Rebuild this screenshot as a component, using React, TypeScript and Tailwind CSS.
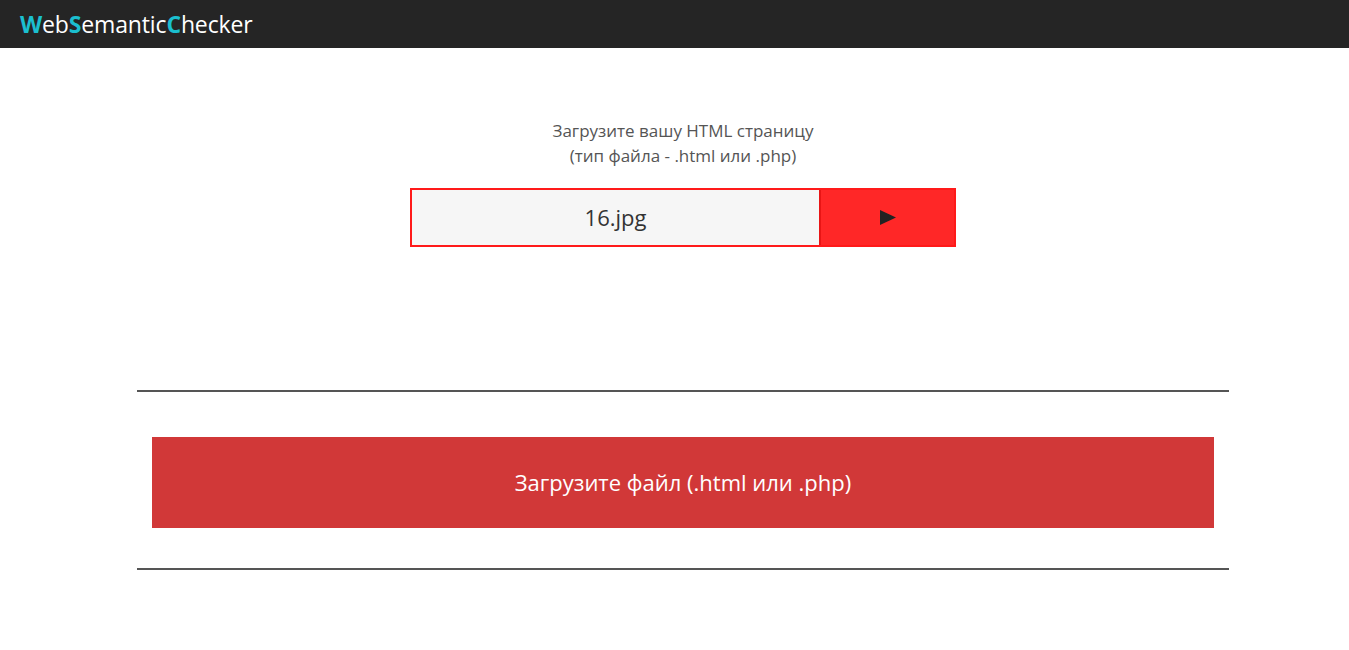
export default function App() {
  return (
    <div className="min-h-screen bg-white font-['Open_Sans','Noto_Sans',sans-serif]">
      <header className="h-12 bg-[#252525] flex items-center px-5">
        <div className="text-[23px] text-white leading-none tracking-[-0.15px]">
          <span className="text-[#1bbfcf] font-bold">W</span>eb
          <span className="text-[#1bbfcf] font-bold">S</span>emantic
          <span className="text-[#1bbfcf] font-bold">C</span>hecker
        </div>
      </header>

      <main className="pl-[17px]">
        <section className="flex flex-col items-center pt-[70px]">
          <p className="text-center text-[17px] leading-[25px] text-[#555]">
            Загрузите вашу HTML страницу
            <br />
            (тип файла - .html или .php)
          </p>
          <div className="mt-[20px] flex w-[546px] h-[59px] border-2 border-[#ff1a1a]">
            <div className="flex-1 bg-[#f6f6f6] flex items-center justify-center text-[22px] text-[#333]">
              16.jpg
            </div>
            <button className="w-[135px] bg-[#ff2727] border-l-2 border-[#e81515] flex items-center justify-center">
              <svg width="18" height="17" viewBox="0 0 18 17">
                <path d="M1 1 L17 8.5 L1 16 Z" fill="#222" />
              </svg>
            </button>
          </div>
        </section>

        <section className="mx-auto w-[1092px] mt-[143px]">
          <div className="h-[2px] bg-[#555]" />
          <div className="mx-[15px] mt-[45px] h-[91px] bg-[#d13838] flex items-center justify-center text-white text-[22px]">
            Загрузите файл (.html или .php)
          </div>
          <div className="mt-[40px] h-[2px] bg-[#555]" />
        </section>
      </main>
    </div>
  );
}
